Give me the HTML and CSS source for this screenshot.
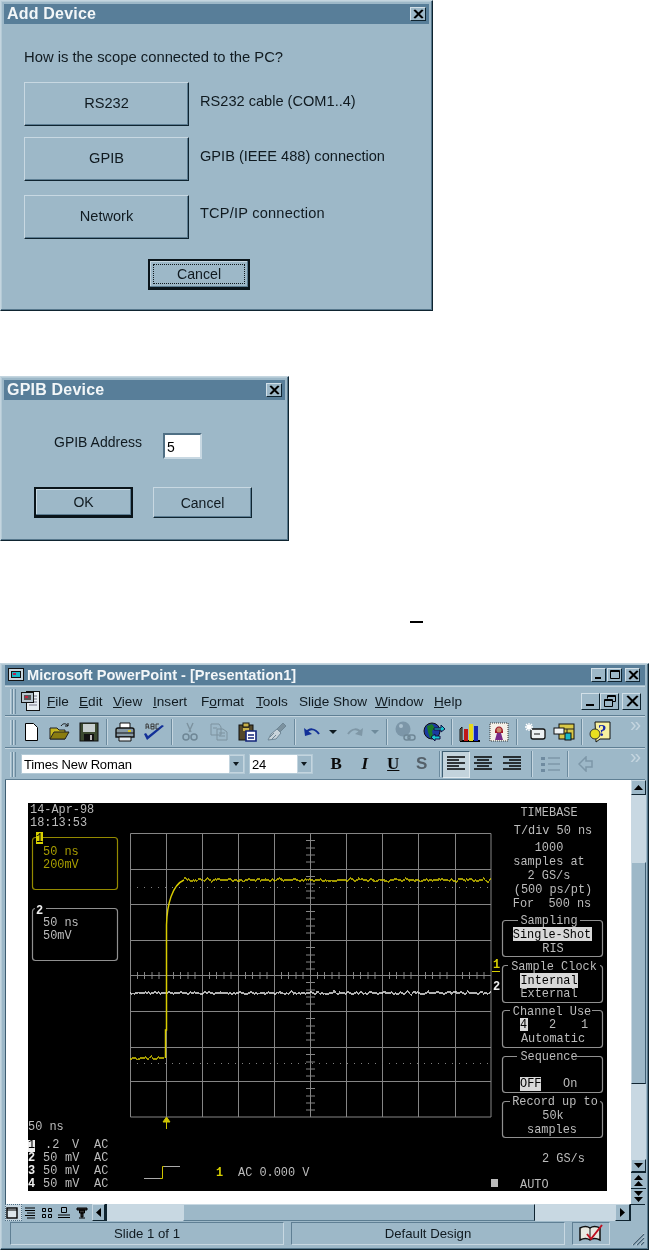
FILE: index.html
```html
<!DOCTYPE html>
<html lang="en">
<head>
<meta charset="utf-8">
<title>Add Device</title>
<link rel="stylesheet" href="styles.css">
</head>
<body>

<section class="window dialog-add">
  <header class="titlebar">
    <span class="title-text">Add Device</span>
    <span class="ctl ctl-close"><svg viewBox="0 0 12 10" width="12" height="10"><path d="M2 1l8 8M3 1l8 8M10 1L2 9M11 1L3 9" stroke="#000" stroke-width="1.3"/></svg></span>
  </header>
  <div class="add-body">
    <p class="question">How is the scope connected to the PC?</p>
    <div class="choice"><button class="btn btn-big">RS232</button><span class="choice-label">RS232 cable (COM1..4)</span></div>
    <div class="choice choice-2"><button class="btn btn-big">GPIB</button><span class="choice-label">GPIB (IEEE 488) connection</span></div>
    <div class="choice choice-3"><button class="btn btn-big">Network</button><span class="choice-label">TCP/IP connection</span></div>
    <button class="btn btn-default btn-cancel-add"><span class="focus">Cancel</span></button>
  </div>
</section>

<section class="window dialog-gpib">
  <header class="titlebar">
    <span class="title-text">GPIB Device</span>
    <span class="ctl ctl-close"><svg viewBox="0 0 12 10" width="12" height="10"><path d="M2 1l8 8M3 1l8 8M10 1L2 9M11 1L3 9" stroke="#000" stroke-width="1.3"/></svg></span>
  </header>
  <div class="gpib-body">
    <div class="addr-row"><span class="addr-label">GPIB Address</span><span class="addr-input">5</span></div>
    <div class="gpib-actions"><button class="btn btn-default btn-wide">OK</button><button class="btn btn-wide">Cancel</button></div>
  </div>
</section>

<div class="mark"></div>

<section class="window app">
  <header class="titlebar app-title">
    <svg class="app-icon" viewBox="0 0 16 14" width="16" height="14"><rect x=".5" y=".5" width="15" height="12" fill="#c9d6de" stroke="#111"/><rect x="3" y="3" width="10" height="7" fill="#111"/><rect x="4" y="4" width="8" height="5" fill="#18b8c8"/><rect x="5" y="5" width="3" height="2" fill="#c02050"/></svg>
    <span class="title-text app-title-text">Microsoft PowerPoint - [Presentation1]</span>
    <span class="win-ctls">
      <span class="ctl"><svg viewBox="0 0 12 10" width="12" height="10"><rect x="2" y="7" width="6" height="2" fill="#000"/></svg></span>
      <span class="ctl"><svg viewBox="0 0 12 10" width="12" height="10"><path d="M1.5 .5h9v8h-9zM1.5 1.5h9" fill="none" stroke="#000"/></svg></span>
      <span class="ctl ctl-x"><svg viewBox="0 0 12 10" width="12" height="10"><path d="M2 1l8 8M3 1l8 8M10 1L2 9M11 1L3 9" stroke="#000" stroke-width="1.3"/></svg></span>
    </span>
  </header>

  <nav class="bar menubar">
    <span class="grip"></span>
    <svg class="doc-icon" viewBox="0 0 22 22" width="22" height="22"><rect x="6.5" y="1.5" width="13" height="19" fill="#e8eef2" stroke="#111"/><path d="M9 6h8M9 9h8M9 12h8M9 15h8" stroke="#778"/><rect x="1.5" y="2.5" width="12" height="10" fill="#b8c6d0" stroke="#111"/><rect x="4" y="5" width="7" height="5" fill="#555"/><rect x="5" y="6" width="3" height="2" fill="#c02040"/></svg>
    <span class="menus">
      <span class="menu m-file"><u>F</u>ile</span>
      <span class="menu m-edit"><u>E</u>dit</span>
      <span class="menu m-view"><u>V</u>iew</span>
      <span class="menu m-insert"><u>I</u>nsert</span>
      <span class="menu m-format">F<u>o</u>rmat</span>
      <span class="menu m-tools"><u>T</u>ools</span>
      <span class="menu m-slide">Sli<u>d</u>e Show</span>
      <span class="menu m-window"><u>W</u>indow</span>
      <span class="menu m-help"><u>H</u>elp</span>
    </span>
    <span class="mdi-ctls">
      <span class="mdi"><svg viewBox="0 0 14 12" width="14" height="12"><rect x="2" y="9" width="8" height="2" fill="#000"/></svg></span>
      <span class="mdi"><svg viewBox="0 0 14 12" width="14" height="12"><path d="M4.5 3.5V.5h8v6h-3M1.5 4.5h8v7h-8zM1.5 5.5h8M4.5 1.5h8" fill="none" stroke="#000"/></svg></span>
      <span class="mdi mdi-x"><svg viewBox="0 0 14 12" width="14" height="12"><path d="M2 1l10 10M3 1l10 10M12 1L2 11M13 1L3 11" stroke="#000" stroke-width="1.3"/></svg></span>
    </span>
  </nav>

  <div class="bar toolbar">
    <span class="grip"></span>
    <span class="tool"><svg viewBox="0 0 20 20" width="20" height="20"><path d="M4.5 1.5h8l4 4v13h-12z" fill="#fff" stroke="#000"/></svg></span>
    <span class="tool"><svg viewBox="0 0 22 20" width="22" height="20"><path d="M1 6h7l2 2h6v9H1z" fill="#c8b820" stroke="#222"/><path d="M1 17l4-7h15l-4 7z" fill="#8a7c10" stroke="#222"/><path d="M12 4c2-3 5-3 7 0M19 4l-3 0M19 4v-3" fill="none" stroke="#111"/></svg></span>
    <span class="tool"><svg viewBox="0 0 20 20" width="20" height="20"><rect x="1" y="1" width="18" height="18" fill="#3c4a30" stroke="#111"/><rect x="4" y="2" width="12" height="8" fill="#c8d0d0"/><rect x="5" y="12" width="10" height="7" fill="#111"/><rect x="11" y="13" width="2" height="5" fill="#bbb"/></svg></span>
    <span class="sep"></span>
    <span class="tool"><svg viewBox="0 0 22 20" width="22" height="20"><path d="M6 1h10v6H6z" fill="#fff" stroke="#111"/><path d="M2 8c0-1 1-2 2-2h14c1 0 2 1 2 2v7H2z" fill="#889aa6" stroke="#111" stroke-width="1.4"/><path d="M2 11h18" stroke="#111"/><rect x="14" y="8" width="3" height="2" fill="#d8c820"/><path d="M5 15h12v4H5z" fill="#e8eef2" stroke="#111"/></svg></span>
    <span class="tool"><svg viewBox="0 0 22 20" width="22" height="20"><path d="M4 18l-3-6 2-1 2 3L19 3l2 1z" fill="#123098"/><path d="M3 7V2h2l1 5M3 5h3M8 2h3v5H8zM8 4.500h3M16 2h-3v5h3" fill="none" stroke="#333" stroke-width=".9"/></svg></span>
    <span class="sep"></span>
    <span class="tool"><svg viewBox="0 0 20 20" width="20" height="20"><path d="M7 1l4 9M13 1l-4 9" stroke="#7c929f" stroke-width="1.4"/><circle cx="6" cy="15" r="3" fill="none" stroke="#6f8796" stroke-width="1.5"/><circle cx="14" cy="15" r="3" fill="none" stroke="#6f8796" stroke-width="1.5"/></svg></span>
    <span class="tool"><svg viewBox="0 0 20 20" width="20" height="20" fill="none" stroke="#7c929f"><path d="M2 2h8l2 3v8H2z"/><path d="M8 7h6l4 3v8H8z"/><path d="M10 11h6M10 14h6M4 6h4"/></svg></span>
    <span class="tool"><svg viewBox="0 0 22 20" width="22" height="20"><rect x="2" y="3" width="14" height="15" fill="#54482a" stroke="#111"/><rect x="6" y="1" width="6" height="4" fill="#c8b04a" stroke="#111"/><rect x="6" y="6" width="6" height="3" fill="#c8b04a"/><path d="M9 9h10v10H9z" fill="#fff" stroke="#12247a" stroke-width="1.6"/><path d="M11 13h6M11 16h6" stroke="#12247a" stroke-width="1.4"/></svg></span>
    <span class="tool"><svg viewBox="0 0 22 20" width="22" height="20"><path d="M2 18l3-6 6-5 4 4-5 6z" fill="#c8d4db" stroke="#6f8796"/><path d="M11 7l6-6 3 3-6 6z" fill="#7c929f" stroke="#6f8796"/><path d="M4 15l4-4M6 17l4-4" stroke="#6f8796"/></svg></span>
    <span class="sep"></span>
    <span class="tool"><svg viewBox="0 0 20 14" width="20" height="14"><path d="M3 8c3-5 9-5 13 1" fill="none" stroke="#123098" stroke-width="2"/><path d="M1 3l1 8 7-2z" fill="#123098"/></svg></span>
    <span class="dd dd-undo"></span>
    <span class="tool tool-redo"><svg viewBox="0 0 20 14" width="20" height="14"><path d="M17 8c-3-5-9-5-13 1" fill="none" stroke="#7f97a6" stroke-width="2"/><path d="M19 3l-1 8-7-2z" fill="#7f97a6"/></svg></span>
    <span class="dd dd-off"></span>
    <span class="sep"></span>
    <span class="tool"><svg viewBox="0 0 22 22" width="22" height="22"><circle cx="9" cy="8" r="7.500" fill="#7c96a8"/><circle cx="7" cy="5" r="2" fill="#a9c0ce"/><rect x="10" y="14" width="6" height="5" rx="2.500" fill="none" stroke="#6f8796" stroke-width="1.5"/><rect x="14" y="14" width="7" height="5" rx="2.500" fill="none" stroke="#6f8796" stroke-width="1.5"/></svg></span>
    <span class="tool"><svg viewBox="0 0 22 22" width="22" height="22"><circle cx="9" cy="10" r="8" fill="#1a3aa0" stroke="#111"/><path d="M4 5l5-2 3 4-3 3 1 5-3 2-2-6z" fill="#1a7a28"/><path d="M11 7h7V4l4 4-4 3V9h-7z" fill="#18c8d0" stroke="#114"/><path d="M11 15h-5v-2l-4 3 4 4v-2h5z" fill="#18c8d0" stroke="#114" transform="translate(6 0)"/></svg></span>
    <span class="sep"></span>
    <span class="tool"><svg viewBox="0 0 22 22" width="22" height="22"><path d="M1 20h20" stroke="#000" stroke-width="2"/><path d="M1 20V8l2-2v14" fill="#8d7f60" stroke="#111"/><rect x="5" y="8" width="4" height="12" fill="#c01818"/><rect x="10" y="3" width="4" height="17" fill="#e8d818"/><rect x="15" y="5" width="4" height="15" fill="#1828b8"/></svg></span>
    <span class="tool"><svg viewBox="0 0 20 20" width="20" height="20"><rect x="1" y="1" width="18" height="18" fill="#f4f0e8" stroke="#333" stroke-dasharray="1 1"/><path d="M6 9c0-6 8-6 8 0v2H6z" fill="#a01828"/><circle cx="10" cy="8" r="2.500" fill="#c88868"/><path d="M6 18l2-7h4l2 7z" fill="#782888"/></svg></span>
    <span class="sep"></span>
    <span class="tool"><svg viewBox="0 0 22 20" width="22" height="20"><rect x="7" y="7" width="14" height="10" rx="2" fill="#eef2f4" stroke="#111" stroke-width="1.3"/><path d="M10 12h6" stroke="#111"/><path d="M5 1v8M1 5h8M2 2l6 6M8 2L2 8" stroke="#fff" stroke-width="1.3"/></svg></span>
    <span class="tool"><svg viewBox="0 0 22 20" width="22" height="20"><rect x="6" y="2" width="15" height="15" fill="#d8c848" stroke="#111"/><path d="M6 7h15M14 7v10" stroke="#222"/><rect x="1" y="6" width="10" height="6" fill="#f0f4f6" stroke="#111"/><rect x="12" y="11" width="6" height="7" fill="#18b8c8" stroke="#111"/></svg></span>
    <span class="sep"></span>
    <span class="tool"><svg viewBox="0 0 22 22" width="22" height="22"><path d="M6 1h15v17H11l-4 3z" fill="#f8f0a0" stroke="#111"/><circle cx="6" cy="13" r="5" fill="#e8e020" stroke="#333"/><text class="help-q" x="9" y="15">?</text></svg></span>
    <span class="chev">»</span>
  </div>

  <div class="bar toolbar fmtbar">
    <span class="grip"></span>
    <span class="combo combo-font"><span class="combo-text">Times New Roman</span><span class="combo-btn"></span></span>
    <span class="combo combo-size"><span class="combo-text">24</span><span class="combo-btn"></span></span>
    <span class="fmt fmt-b">B</span>
    <span class="fmt fmt-i">I</span>
    <span class="fmt fmt-u">U</span>
    <span class="fmt fmt-s">S</span>
    <span class="sep sep-fmt"></span>
    <span class="tool tool-on"><svg viewBox="0 0 18 16" width="18" height="16"><path d="M0 1h18M0 4h12M0 7h18M0 10h12M0 13h18" stroke="#000" stroke-width="1.500"/></svg></span>
    <span class="tool tool-center"><svg viewBox="0 0 18 16" width="18" height="16"><path d="M0 1h18M3 4h12M0 7h18M3 10h12M0 13h18" stroke="#000" stroke-width="1.500"/></svg></span>
    <span class="tool tool-right"><svg viewBox="0 0 18 16" width="18" height="16"><path d="M0 1h18M6 4h12M0 7h18M6 10h12M0 13h18" stroke="#000" stroke-width="1.500"/></svg></span>
    <span class="sep"></span>
    <span class="tool"><svg viewBox="0 0 20 18" width="20" height="18"><path d="M1 2h4v3H1zM1 8h4v3H1zM1 14h4v3H1z" fill="#6f8ba0"/><path d="M8 3h12M8 9h12M8 15h12" stroke="#7d97a8" stroke-width="1.500"/></svg></span>
    <span class="sep"></span>
    <span class="tool"><svg viewBox="0 0 16 16" width="16" height="16"><path d="M14 5H8V1L1 8l7 7v-4h6z" fill="none" stroke="#7d97a8" stroke-width="1.500"/></svg></span>
    <span class="chev">»</span>
  </div>

  <div class="workspace">
    <main class="doc">
      <svg class="scope" viewBox="28 803 579 388" width="579" height="388">
        <defs>
          <filter id="noise" x="120" y="860" width="385" height="210" filterUnits="userSpaceOnUse" color-interpolation-filters="sRGB">
            <feTurbulence type="fractalNoise" baseFrequency=".3 .02" numOctaves="2" seed="7"/>
            <feColorMatrix type="matrix" values="0 0 0 0 .5  0 1 0 0 0  0 0 0 0 0  0 0 0 0 1"/>
            <feDisplacementMap in="SourceGraphic" scale="6" xChannelSelector="R" yChannelSelector="G"/>
          </filter>
        </defs>
        <rect x="28" y="803" width="579" height="388" fill="#000"/>
        <path class="grid" d="M130.500 833.500H491V1117H130.500ZM166.500 833.500V1117M202.500 833.500V1117M238.500 833.500V1117M274.500 833.500V1117M346.500 833.500V1117M382.500 833.500V1117M418.500 833.500V1117M455.500 833.500V1117M130 869.500H491M130 904.500H491M130 940.500H491M130 1011.500H491M130 1047.500H491M130 1081.500H491"/>
        <path class="grid-axis" d="M130 975.500H491M310.500 833.500V1117"/>
        <path class="grid-tick" d="M137.500 972v7M144.500 972v7M152 972v7M159 972v7M173.500 972v7M180.500 972v7M188 972v7M195 972v7M209.500 972v7M216.500 972v7M224 972v7M231 972v7M245.500 972v7M252.500 972v7M260 972v7M267 972v7M281.500 972v7M288.500 972v7M296 972v7M303 972v7M317.500 972v7M324.500 972v7M332 972v7M339 972v7M353.500 972v7M360.500 972v7M368 972v7M375 972v7M389.500 972v7M396.500 972v7M404 972v7M411 972v7M425.500 972v7M432.500 972v7M440 972v7M447 972v7M462.500 972v7M469.500 972v7M477 972v7M484 972v7"/>
        <path class="grid-tick" d="M306 840.500h9M306 848h9M306 855h9M306 862h9M306 876.500h9M306 884h9M306 891h9M306 898h9M306 911.500h9M306 919h9M306 926h9M306 933h9M306 947.500h9M306 955h9M306 962h9M306 969h9M306 982.500h9M306 990h9M306 997h9M306 1004h9M306 1018.500h9M306 1026h9M306 1033h9M306 1040h9M306 1054.500h9M306 1062h9M306 1069h9M306 1076h9M306 1088.500h9M306 1096h9M306 1103h9M306 1110h9"/>
        <path class="dots" d="M130 887.500H491M130 1063.500H491"/>
        <path class="trace-w" filter="url(#noise)" d="M130 993H491"/>
        <path class="trace-y" filter="url(#noise)" d="M130 1058H164M184 880H491"/>
        <path class="trace-y" d="M165.500 1058V1030H166.500V925C167 905 172 885 184 880"/>
        <path class="arrow-y" d="M166.500 1129V1119M163 1122L166.500 1117L170 1122Z"/>

        <text class="t" x="30" y="813">14-Apr-98</text>
        <text class="t" x="30" y="826">18:13:53</text>

        <rect class="box-y" x="32.500" y="837.500" width="85" height="52" rx="3"/>
        <rect x="36" y="832" width="7" height="12" fill="#d8d000"/>
        <text class="t t-k" x="36" y="842">1</text>
        <text class="t t-y" x="43" y="855">50 ns</text>
        <text class="t t-y" x="43" y="868">200mV</text>
        <rect class="box-w" x="32.500" y="908.500" width="85" height="52" rx="3"/>
        <rect x="35" y="906" width="11" height="6" fill="#000"/>
        <text class="t t-hi" x="36" y="914">2</text>
        <text class="t" x="43" y="926">50 ns</text>
        <text class="t" x="43" y="939">50mV</text>

        <text class="t tc" x="549" y="816">TIMEBASE</text>
        <text class="t tc" x="553" y="834">T/div 50 ns</text>
        <text class="t tc" x="549" y="851">1000</text>
        <text class="t tc" x="549" y="865">samples at</text>
        <text class="t tc" x="549" y="879">2 GS/s</text>
        <text class="t tc" x="553" y="893">(500 ps/pt)</text>
        <text class="t tc" x="552" y="907">For  500 ns</text>

        <rect class="box-w" x="502.500" y="920.500" width="100" height="36" rx="3"/>
        <rect x="518" y="916" width="62" height="9" fill="#000"/>
        <text class="t tc" x="549" y="924">Sampling</text>
        <rect class="hl" x="513" y="927" width="79" height="14"/>
        <text class="t tc t-k" x="552" y="938">Single-Shot</text>
        <text class="t tc" x="553" y="952">RIS</text>

        <rect class="box-w" x="502.500" y="965.500" width="100" height="37" rx="3"/>
        <rect x="508" y="961" width="92" height="9" fill="#000"/>
        <text class="t tc" x="554" y="970">Sample Clock</text>
        <rect class="hl" x="520" y="973" width="58" height="15"/>
        <text class="t tc t-k" x="549" y="984">Internal</text>
        <text class="t tc" x="549" y="997">External</text>

        <rect class="box-w" x="502.500" y="1010.500" width="100" height="37" rx="3"/>
        <rect x="510" y="1006" width="82" height="9" fill="#000"/>
        <text class="t tc" x="552" y="1015">Channel Use</text>
        <rect class="hl" x="520" y="1018" width="8" height="13"/>
        <text class="t t-k" x="520" y="1028">4</text>
        <text class="t" x="549" y="1028">2</text>
        <text class="t" x="581" y="1028">1</text>
        <text class="t tc" x="553" y="1042">Automatic</text>

        <rect class="box-w" x="502.500" y="1056.500" width="100" height="36" rx="3"/>
        <rect x="517" y="1052" width="60" height="9" fill="#000"/>
        <text class="t tc" x="549" y="1060">Sequence</text>
        <rect class="hl" x="520" y="1077" width="21" height="14"/>
        <text class="t t-k" x="520" y="1087">OFF</text>
        <text class="t" x="563" y="1087">On</text>

        <rect class="box-w" x="502.500" y="1101.500" width="100" height="36" rx="3"/>
        <rect x="510" y="1097" width="90" height="9" fill="#000"/>
        <text class="t tc" x="555" y="1105">Record up to</text>
        <text class="t tc" x="553" y="1119">50k</text>
        <text class="t tc" x="552" y="1133">samples</text>

        <text class="t" x="542" y="1162">2 GS/s</text>
        <rect x="491" y="1179" width="7" height="8" fill="#bbb"/>
        <text class="t" x="520" y="1188">AUTO</text>

        <text class="t t-yb" x="493" y="968">1</text>
        <path d="M492 971.500h8" stroke="#d8d000"/>
        <text class="t t-hi" x="493" y="990">2</text>

        <text class="t" x="28" y="1130">50 ns</text>
        <rect x="28" y="1140" width="7" height="12" fill="#eee"/>
        <text class="t t-k" x="28" y="1148">1</text>
        <text class="t" x="45" y="1148">.2</text><text class="t" x="72" y="1148">V</text><text class="t" x="94" y="1148">AC</text>
        <text class="t t-hi" x="28" y="1161">2</text>
        <text class="t" x="43" y="1161">50</text><text class="t" x="65" y="1161">mV</text><text class="t" x="94" y="1161">AC</text>
        <text class="t t-hi" x="28" y="1174">3</text>
        <text class="t" x="43" y="1174">50</text><text class="t" x="65" y="1174">mV</text><text class="t" x="94" y="1174">AC</text>
        <text class="t t-hi" x="28" y="1187">4</text>
        <text class="t" x="43" y="1187">50</text><text class="t" x="65" y="1187">mV</text><text class="t" x="94" y="1187">AC</text>

        <path class="step-w" d="M144 1178.500H160M163 1166.500H180"/>
        <path class="step-y" d="M160 1178.500H162.500V1166.500H164"/>
        <text class="t t-yb" x="216" y="1176">1</text>
        <text class="t" x="238" y="1176">AC 0.000 V</text>
      </svg>
    </main>
    <aside class="vscroll">
      <span class="sb-btn"><svg viewBox="0 0 9 5" width="9" height="5"><path d="M4.500 0L9 5H0z"/></svg></span>
      <span class="track track-a"></span>
      <span class="thumb-v"></span>
      <span class="track track-b"></span>
      <span class="sb-btn sb-down"><svg viewBox="0 0 9 5" width="9" height="5"><path d="M0 0h9L4.500 5z"/></svg></span>
      <span class="sb-page"><svg viewBox="0 0 9 12" width="9" height="12"><path d="M4.500 0L9 5H0zM4.500 6L9 11H0z"/></svg></span>
      <span class="sb-page"><svg viewBox="0 0 9 12" width="9" height="12"><path d="M0 0h9L4.500 5zM0 6h9L4.500 11z"/></svg></span>
    </aside>
  </div>

  <div class="hscroll">
    <span class="views">
      <span class="view view-on"><svg viewBox="0 0 12 12" width="12" height="12"><rect x="1" y="1" width="10" height="10" fill="#dde6eb" stroke="#000" stroke-width="1.400"/><path d="M1 3h10" stroke="#000"/></svg></span>
      <span class="view"><svg viewBox="0 0 12 12" width="12" height="12"><path d="M1 1h10M1 3.500h10M3 6h8M1 8.500h10M3 11h8" stroke="#000"/></svg></span>
      <span class="view"><svg viewBox="0 0 12 12" width="12" height="12"><path d="M1.500 1.500h3v3h-3zM7.500 1.500h3v3h-3zM1.500 7.500h3v3h-3zM7.500 7.500h3v3h-3z" fill="none" stroke="#000"/></svg></span>
      <span class="view"><svg viewBox="0 0 12 12" width="12" height="12"><path d="M3.500 .5h5v5h-5zM0 8h12M0 10.500h12" fill="none" stroke="#000"/></svg></span>
      <span class="view"><svg viewBox="0 0 12 12" width="12" height="12"><path d="M1 1h10v2H1zM3.500 3h5v3h-5zM5 6h2v4H5zM3 11h6" fill="#333" stroke="#000"/></svg></span>
    </span>
    <span class="sb-btn sb-h"><svg viewBox="0 0 5 9" width="5" height="9"><path d="M5 0v9L0 4.500z"/></svg></span>
    <span class="track track-h1"></span>
    <span class="thumb-h"></span>
    <span class="track track-h2"></span>
    <span class="sb-btn sb-h2"><svg viewBox="0 0 5 9" width="5" height="9"><path d="M0 0v9l5-4.500z"/></svg></span>
    <span class="corner"></span>
  </div>

  <footer class="status">
    <span class="panel panel-text">Slide 1 of 1</span>
    <span class="panel panel-text">Default Design</span>
    <span class="panel panel-icon"><svg viewBox="0 0 24 20" width="24" height="20"><path d="M1 16V4c4-2 7-2 10 0 3-2 6-2 10 0v12c-4-2-7-2-10 0-3-2-6-2-10 0z" fill="#e8e8e0" stroke="#111" stroke-width="1.500"/><path d="M11 4v12" stroke="#111"/><path d="M8 10l4 5L23 1" fill="none" stroke="#c01020" stroke-width="2"/></svg></span>
    <svg class="size-grip" viewBox="0 0 15 15" width="15" height="15"><path d="M14 2L2 14M14 6L6 14M14 10L10 14" stroke="#e2ebf0" stroke-width="1"/><path d="M14 3L3 14M14 7L7 14M14 11L11 14" stroke="#425f73" stroke-width="1.200"/></svg>
  </footer>
</section>

</body>
</html>
```

FILE: styles.css
```css
* { box-sizing: border-box; }

html, body { margin: 0; padding: 0; background: #fff; }

body {
  width: 649px;
  height: 1250px;
  overflow: hidden;
  font-family: "Liberation Sans", Arial, sans-serif;
  font-size: 14px;
  color: #101a20;
}

p { margin: 0; }

.window {
  background: #9db8c8;
  border: 1px solid;
  border-color: #c4d5df #0f2430 #0f2430 #c4d5df;
  box-shadow: inset -1px -1px 0 #56778c, inset 1px 1px 0 #b4cad6;
  filter: blur(.45px);
}

.titlebar {
  display: flex;
  flex: none;
  align-items: center;
  height: 20px;
  background: #587e99;
  color: #f2f6f8;
}

.title-text {
  font-weight: 700;
  font-size: 16px;
  letter-spacing: .2px;
  white-space: nowrap;
}

.ctl {
  display: flex;
  align-items: center;
  justify-content: center;
  width: 16px;
  height: 14px;
  background: #9db8c8;
  border: 1px solid;
  border-color: #d2e0e8 #0f2430 #0f2430 #d2e0e8;
}

.ctl-close { margin-left: auto; margin-right: 3px; }

/* Add Device */
.dialog-add {
  width: 433px;
  height: 311px;
  padding: 3px;
}

.dialog-add .title-text { margin-left: 3px; }

.add-body {
  display: flex;
  flex-direction: column;
  align-items: flex-start;
  padding: 23px 0 0 20px;
  font-size: 14.6px;
}

.question { line-height: 20px; margin-bottom: 15px; white-space: nowrap; font-size: 14.8px; }

.choice { display: flex; align-items: center; gap: 11px; }
.choice-2 { margin-top: 11px; }
.choice-3 { margin-top: 14px; }
.choice-3 .choice-label { padding-bottom: 9px; letter-spacing: .2px; }
.choice-label { padding-bottom: 6px; white-space: nowrap; }

.btn {
  display: flex;
  align-items: center;
  justify-content: center;
  padding: 0;
  background: #9db8c8;
  font: inherit;
  color: #101a20;
  border: 1px solid;
  border-color: #c8d8e2 #0f2430 #0f2430 #c8d8e2;
  box-shadow: inset -1px -1px 0 #5c7d92;
}

.btn-big { width: 165px; height: 44px; padding-bottom: 3px; }

.btn-default {
  border: 2px solid #0a141a;
  border-bottom-width: 3px;
  box-shadow: inset -1px -1px 0 #5c7d92, inset 1px 1px 0 #c8d8e2;
}

.btn-cancel-add { width: 102px; height: 31px; margin: 20px 0 0 124px; font-size: 14.2px; }

.focus {
  display: flex;
  align-items: center;
  justify-content: center;
  width: 92px;
  height: 20px;
  border: 1px dotted #101a20;
}

/* GPIB Device */
.dialog-gpib {
  width: 289px;
  height: 165px;
  margin-top: 65px;
  padding: 3px;
}

.dialog-gpib .title-text { margin-left: 3px; }

.gpib-body { padding: 33px 0 0 50px; }

.addr-row { display: flex; align-items: flex-start; gap: 21px; }

.addr-label { line-height: 18px; white-space: nowrap; }

.addr-input {
  width: 39px;
  height: 26px;
  padding: 2px 0 0 2px;
  background: #fff;
  color: #000;
  border: 2px solid;
  border-color: #4f6f84 #c8d8e2 #c8d8e2 #4f6f84;
  line-height: 20px;
}

.gpib-actions { display: flex; gap: 20px; margin: 28px 0 0 -20px; }

.btn-wide { width: 99px; height: 31px; }

.mark {
  width: 13px;
  height: 2px;
  margin: 80px 0 0 410px;
  background: #000;
}

/* PowerPoint */
.app {
  display: flex;
  flex-direction: column;
  width: 649px;
  height: 587px;
  margin-top: 40px;
  padding: 1px 3px 3px 4px;
  overflow: hidden;
}

.app-icon { margin: 0 3px 0 3px; flex: none; }

.app-title-text { font-size: 14.600px; letter-spacing: 0; }

.win-ctls { display: flex; margin-left: auto; margin-right: 5px; }
.win-ctls .ctl { width: 15px; margin-left: 1px; }
.win-ctls .ctl-x { margin-left: 3px; }

.bar {
  display: flex;
  align-items: center;
  flex: none;
  border-top: 1px solid #c4d5df;
  border-bottom: 1px solid #5f7f94;
}

.grip {
  flex: none;
  width: 6px;
  height: 25px;
  margin: 0 0 0 5px;
  background: linear-gradient(90deg, #c4d5df 0 1px, #9db8c8 1px 2px, #6b8a9e 2px 3px, #c4d5df 3px 4px, #9db8c8 4px 5px, #6b8a9e 5px 6px);
}

.menubar { height: 30px; margin-top: 1px; }

.doc-icon { margin-left: 4px; flex: none; }

.menus { display: flex; align-items: center; flex: 1; font-size: 13.600px; white-space: nowrap; }
.menu { flex: none; }
.m-file { width: 32px; margin-left: 5px; }
.m-edit { width: 34px; }
.m-view { width: 40px; }
.m-insert { width: 48px; }
.m-format { width: 55px; }
.m-tools { width: 43px; }
.m-slide { width: 76px; }
.m-window { width: 59px; }
.m-help { width: 40px; }

.mdi-ctls { display: flex; margin-right: 4px; }

.mdi {
  display: flex;
  align-items: center;
  justify-content: center;
  width: 19px;
  height: 17px;
  background: #9db8c8;
  border: 1px solid;
  border-color: #d2e0e8 #0f2430 #0f2430 #d2e0e8;
}
.mdi-x { margin-left: 3px; }

.toolbar { height: 32px; position: relative; }

.tool {
  display: flex;
  flex: none;
  align-items: center;
  justify-content: center;
  width: 29px;
  height: 26px;
}

.sep {
  flex: none;
  width: 7px;
  height: 26px;
  margin: 0;
  background: linear-gradient(90deg, transparent 3px, #6b8a9e 3px, #6b8a9e 4px, #c4d5df 4px, #c4d5df 5px, transparent 5px);
}

.tool-redo { width: 26px; margin-left: 4px; }

.dd {
  flex: none;
  width: 0;
  height: 0;
  border-top: 4px solid #0f1a20;
  border-left: 4px solid transparent;
  border-right: 4px solid transparent;
}
.dd-undo { margin-left: 2px; }
.dd-off { border-top-color: #6f8b9c; margin: 0 4px 0 4px; }

.chev {
  position: absolute;
  right: 4px;
  top: -3px;
  font-size: 20px;
  line-height: 20px;
  color: #c4d5df;
}

.combo {
  display: flex;
  align-items: center;
  flex: none;
  height: 20px;
  background: #fff;
  border: 1px solid #b4cad6;
}
.combo-font { width: 224px; margin-left: 5px; }
.combo-size { width: 64px; margin-left: 4px; margin-right: 9px; }
.combo-text { flex: 1; padding-left: 2px; font-size: 13px; letter-spacing: -.15px; color: #000; }

.combo-btn {
  position: relative;
  flex: none;
  width: 15px;
  height: 18px;
  background: #9db8c8;
  border: 1px solid #c4d5df;
}
.combo-btn::after {
  content: "";
  position: absolute;
  left: 3px;
  top: 6px;
  border-top: 4px solid #0f1a20;
  border-left: 3px solid transparent;
  border-right: 3px solid transparent;
}

.fmt {
  flex: none;
  width: 28.500px;
  text-align: center;
  font-family: "Liberation Serif", serif;
  font-size: 17px;
  font-weight: 700;
  color: #0a0a0a;
}
.fmt-i { font-style: italic; }
.fmt-u { text-decoration: underline; }
.fmt-s { color: #55616a; font-family: "Liberation Sans", sans-serif; }

.sep-fmt {
  width: 3px;
  margin-left: 3px;
  background: linear-gradient(90deg, #6b8a9e 1px, #c4d5df 1px, #c4d5df 2px, transparent 2px);
}

.tool-on {
  width: 28px;
  height: 27px;
  background: #c3d3dc;
  background-image: radial-gradient(#9db8c8 .5px, transparent .6px);
  background-size: 2px 2px;
  border: 1px solid;
  border-color: #3f5e72 #e0e9ee #e0e9ee #3f5e72;
}
.tool-center { width: 26px; }
.tool-right { width: 32px; }

.workspace { display: flex; flex: none; height: 424px; }

.doc {
  flex: none;
  width: 626px;
  height: 424px;
  padding: 23px 0 0 22px;
  background: #fff;
  border-left: 1px solid #3f5e72;
}

.scope { display: block; }

.grid, .grid-axis, .grid-tick { fill: none; stroke: #858585; }
.dots { fill: none; stroke: #808080; stroke-dasharray: 1 6; }
.trace-y { fill: none; stroke: #d8cc00; stroke-width: 1.500; }
.trace-w { fill: none; stroke: #ececec; stroke-width: 1.500; }
.arrow-y { stroke: #cfc400; fill: #cfc400; }
.box-y { fill: none; stroke: #948a00; stroke-width: 1.200; }
.box-w { fill: none; stroke: #909090; stroke-width: 1.200; }
.hl { fill: #d8d8d8; }
.step-w { fill: none; stroke: #aaa; }
.step-y { fill: none; stroke: #cfc400; }

.t {
  font-family: "Liberation Mono", "DejaVu Sans Mono", monospace;
  font-size: 11.900px;
  fill: #bcbcbc;
  white-space: pre;
}
.tc { text-anchor: middle; }
.t-k { fill: #000; }
.t-y { fill: #a89e00; }
.t-yb { fill: #d8d000; font-weight: 700; }
.t-hi { fill: #eee; font-weight: 700; }

.help-q { font-family: "Liberation Serif", serif; font-size: 17px; font-weight: 700; fill: #1828a8; }

.vscroll { display: flex; flex-direction: column; flex: none; width: 15px; height: 424px; }

.sb-btn {
  display: flex;
  align-items: center;
  justify-content: center;
  flex: none;
  height: 15px;
  background: #9db8c8;
  border: 1px solid;
  border-color: #c8d8e2 #0f2430 #0f2430 #c8d8e2;
}
.sb-down { height: 13px; }

.sb-page {
  display: flex;
  align-items: center;
  justify-content: center;
  flex: none;
  height: 16px;
  background: #9db8c8;
  border-top: 1px solid #0f2430;
}

.track { background: #c8d8e2; }
.track-a { flex: none; height: 67px; }
.thumb-v {
  flex: none;
  height: 222px;
  background: #9db8c8;
  border: 1px solid;
  border-color: #c8d8e2 #3f5e72 #0f2430 #c8d8e2;
}
.track-b { flex: 1; }

.hscroll { display: flex; align-items: stretch; flex: none; height: 17px; }

.views { display: flex; flex: none; width: 87px; background: #9db8c8; }

.view {
  display: flex;
  align-items: center;
  justify-content: center;
  flex: 1;
}
.view svg { margin-right: 3px; }
.view-on { background: #c8d8e2; outline: 1px dotted #4f6f84; outline-offset: -1px; }

.sb-h { width: 13px; height: auto; }
.sb-h2 { width: 15px; height: auto; }

.track-h1 { flex: none; width: 78px; border-left: 2px solid #0f2430; }

.thumb-h {
  flex: none;
  width: 352px;
  background: #9db8c8;
  border: 1px solid;
  border-color: #c8d8e2 #0f2430 #5c7d92 #c8d8e2;
}

.track-h2 { flex: none; width: 80px; }

.corner { flex: 1; background: #9db8c8; border-top: 1px solid #0f2430; border-left: 1px solid #0f2430; }

.status {
  display: flex;
  align-items: center;
  gap: 7px;
  flex: none;
  height: 25px;
  padding-left: 5px;
  position: relative;
}

.panel {
  display: flex;
  align-items: center;
  justify-content: center;
  flex: none;
  height: 23px;
  border: 1px solid;
  border-color: #5f7f94 #c8d8e2 #c8d8e2 #5f7f94;
}
.panel-text { width: 274px; font-size: 13.200px; }
.panel-icon { width: 38px; }

.size-grip { position: absolute; right: 0; bottom: 0; }
```
